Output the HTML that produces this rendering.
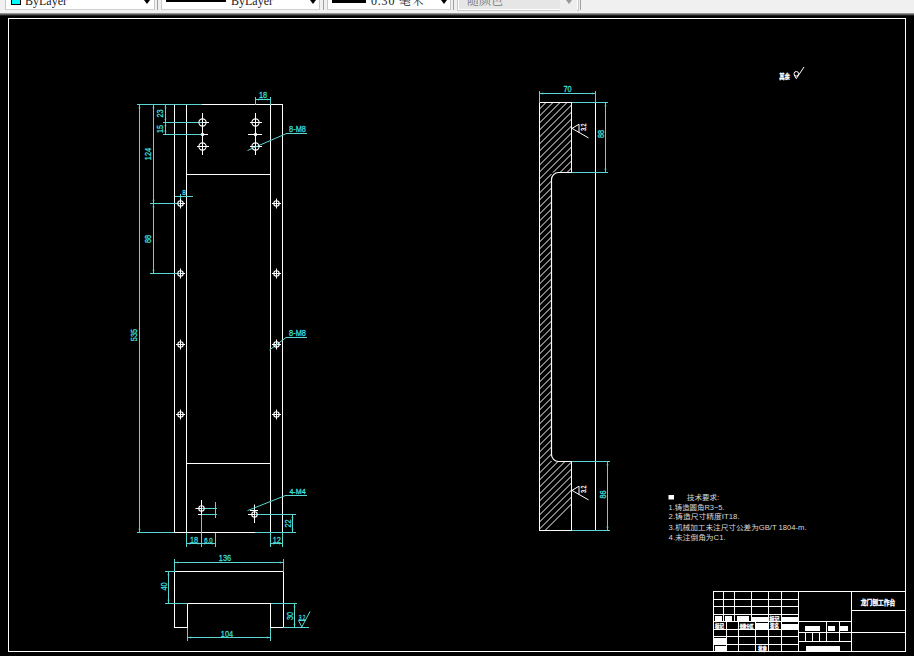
<!DOCTYPE html>
<html lang="zh"><head><meta charset="utf-8"><title>CAD</title>
<style>
html,body{margin:0;padding:0;background:#000;}
#app{position:relative;width:914px;height:656px;overflow:hidden;background:#000;font-family:"Liberation Sans","Noto Sans CJK SC",sans-serif;}
#tb{position:absolute;left:0;top:0;width:914px;height:13px;background:#f0f0f0;overflow:hidden;}
#tbs{position:absolute;left:0;top:13px;width:914px;height:3px;background:linear-gradient(#b0b0b0,#505050 55%,#000);}
.cb{position:absolute;top:-10px;height:20px;background:#fff;border:1px solid #c8c8c8;border-bottom-color:#d0d0d0;box-sizing:border-box;}
.cb span{position:absolute;top:3px;font:12px/14px "Liberation Serif","Noto Serif CJK SC",serif;color:#222;white-space:nowrap;}
.arr{position:absolute;top:9px;width:0;height:0;border-left:3.5px solid transparent;border-right:3.5px solid transparent;border-top:4px solid #000;}
.sep{position:absolute;top:0;width:1px;height:10px;background:#a0a0a0;}

</style></head><body><div id="app">
<svg width="914" height="656" viewBox="0 0 914 656" style="position:absolute;left:0;top:0" font-family="'Liberation Sans','Noto Sans CJK SC',sans-serif">
<path d="M539.50 109.00L546.00 102.50M539.50 116.00L553.00 102.50M539.50 123.00L560.00 102.50M539.50 130.00L567.00 102.50M539.50 137.00L571.50 105.00M539.50 144.00L571.50 112.00M539.50 151.00L571.50 119.00M539.50 158.00L571.50 126.00M539.50 165.00L571.50 133.00M539.50 172.00L571.50 140.00M539.50 179.00L571.50 147.00M539.50 186.00L551.50 174.00M553.00 172.50L571.50 154.00M539.50 193.00L551.50 181.00M560.00 172.50L571.50 161.00M539.50 200.00L551.50 188.00M567.00 172.50L571.50 168.00M539.50 207.00L551.50 195.00M539.50 214.00L551.50 202.00M539.50 221.00L551.50 209.00M539.50 228.00L551.50 216.00M539.50 235.00L551.50 223.00M539.50 242.00L551.50 230.00M539.50 249.00L551.50 237.00M539.50 256.00L551.50 244.00M539.50 263.00L551.50 251.00M539.50 270.00L551.50 258.00M539.50 277.00L551.50 265.00M539.50 284.00L551.50 272.00M539.50 291.00L551.50 279.00M539.50 298.00L551.50 286.00M539.50 305.00L551.50 293.00M539.50 312.00L551.50 300.00M539.50 319.00L551.50 307.00M539.50 326.00L551.50 314.00M539.50 333.00L551.50 321.00M539.50 340.00L551.50 328.00M539.50 347.00L551.50 335.00M539.50 354.00L551.50 342.00M539.50 361.00L551.50 349.00M539.50 368.00L551.50 356.00M539.50 375.00L551.50 363.00M539.50 382.00L551.50 370.00M539.50 389.00L551.50 377.00M539.50 396.00L551.50 384.00M539.50 403.00L551.50 391.00M539.50 410.00L551.50 398.00M539.50 417.00L551.50 405.00M539.50 424.00L551.50 412.00M539.50 431.00L551.50 419.00M539.50 438.00L551.50 426.00M539.50 445.00L551.50 433.00M539.50 452.00L551.50 440.00M539.50 459.00L551.50 447.00M539.50 466.00L551.50 454.00M539.50 473.00L551.50 461.00M539.50 480.00L558.00 461.50M539.50 487.00L565.00 461.50M539.50 494.00L571.50 462.00M539.50 501.00L571.50 469.00M539.50 508.00L571.50 476.00M539.50 515.00L571.50 483.00M539.50 522.00L571.50 490.00M539.50 529.00L571.50 497.00M545.00 530.50L571.50 504.00" stroke="#fff" stroke-width="1.0" fill="none"/>
<path d="M8 18.5L906 18.5M8 651.5L906 651.5M8.5 18L8.5 652M905.5 18L905.5 652M174.5 104L174.5 533M282.5 104L282.5 533M186.5 104L186.5 533M270.5 104L270.5 533M174 104.5L283 104.5M174 532.5L283 532.5M186 174.5L271 174.5M186 463.5L271 463.5M202.5 113L202.5 155M197.0 122.5L209.0 122.5M197.0 146.5L209.0 146.5M255.5 113L255.5 155M250.0 122.5L262.0 122.5M250.0 146.5L262.0 146.5M202.5 134.5L208 134.5M248 134.5L262 134.5M176.0 203.5L185.0 203.5M180.5 198.5L180.5 208.5M272.0 203.5L281.0 203.5M276.5 198.5L276.5 208.5M176.0 273.5L185.0 273.5M180.5 268.5L180.5 278.5M272.0 273.5L281.0 273.5M276.5 268.5L276.5 278.5M176.0 344.5L185.0 344.5M180.5 339.5L180.5 349.5M272.0 344.5L281.0 344.5M276.5 339.5L276.5 349.5M176.0 414.5L185.0 414.5M180.5 409.5L180.5 419.5M272.0 414.5L281.0 414.5M276.5 409.5L276.5 419.5M195.5 508.5L205 508.5M201.5 500L201.5 517M198 514.5L205 514.5M248 514.5L258 514.5M254.5 504.5L254.5 523M250 510.5L258 510.5M174 571.5L284 571.5M174.5 571L174.5 628M283.5 571L283.5 628M187 603.5L271 603.5M187.5 603L187.5 628M270.5 603L270.5 628M174 627.5L188 627.5M270 627.5L284 627.5M539.5 102L539.5 531M595.5 102L595.5 531M539 102.5L572 102.5M571.5 102L571.5 173M539 530.5L572 530.5M571.5 461L571.5 531M572 128.4L579 124.2M579 124.2L579 132.6M572 128.4L588.5 137.9M572 490.4L579 486.2M579 486.2L579 494.59999999999997M572 490.4L588.5 499.9M794.3 75.2L796.3 78.6M796.3 78.6L804 67M713 591.5L906 591.5M713.5 591L713.5 652M798.5 591L798.5 652M851.5 591L851.5 652M713 599.5L799 599.5M713 606.5L799 606.5M713 614.5L799 614.5M713 621.5L799 621.5M713 629.5L799 629.5M713 636.5L799 636.5M713 644.5L799 644.5M723.5 591L723.5 622M734.5 591L734.5 622M751.5 591L751.5 622M768.5 591L768.5 622M781.5 591L781.5 622M726.5 621L726.5 652M738.5 621L738.5 652M755.5 621L755.5 652M768.5 621L768.5 652M781.5 621L781.5 652M798 621.5L852 621.5M798 632.5L852 632.5M798 641.5L852 641.5M826.5 621L826.5 642M839.5 621L839.5 642M805.5 632L805.5 642M812.5 632L812.5 642M819.5 632L819.5 642M851 610.5L906 610.5M851 632.5L906 632.5" stroke="#ffffff" stroke-width="1" fill="none"/>
<path d="M137 104.5L202 104.5M137 532.5L174 532.5M139.5 104L139.5 533M153.5 104L153.5 204M150 203.5L180 203.5M153.5 204L153.5 274M150 273.5L180 273.5M165.5 104L165.5 135M163 122.5L202 122.5M163 134.5L202 134.5M175 196.5L193 196.5M180.5 194L180.5 199M255 99.5L271 99.5M255.5 97L255.5 105M270.5 97L270.5 105M247.5 150.5L286.5 133.5M286 133.5L307 133.5M269.5 350L286 337.5M286 337.5L307 337.5M247.5 510.6L285.5 495.5M285 495.5L307 495.5M186.5 533L186.5 547M201.5 515L201.5 547M215.5 502L215.5 518M215.5 533L215.5 547M186 543.5L216 543.5M202 508.5L217 508.5M202 514.5L217 514.5M270.5 533L270.5 547M282.5 533L282.5 547M270 543.5L283 543.5M255 514.5L296 514.5M255 532.5L296 532.5M292.5 514L292.5 533M174.5 559L174.5 572M283.5 559L283.5 572M174 562.5L284 562.5M165 571.5L175 571.5M165 603.5L188 603.5M168.5 571L168.5 604M271 603.5L297 603.5M283 627.5L309 627.5M294.5 603L294.5 628M187.5 628L187.5 641M270.5 628L270.5 641M187 637.5L271 637.5M298.5 620.5L301.8 627M301.8 627L310 611.5M298.5 620.5L306 620.5M539.5 91L539.5 103M595.5 91L595.5 103M539 93.5L596 93.5M572 102.5L608 102.5M572 172.5L608 172.5M605.5 102L605.5 173M572 461.5L610 461.5M572 530.5L610 530.5M607.5 461L607.5 531" stroke="#5cd6d2" stroke-width="1" fill="none"/>
<circle cx="202.5" cy="122.5" r="3.6" fill="none" stroke="#ffffff" stroke-width="1.1"/>
<circle cx="202.5" cy="146.5" r="3.6" fill="none" stroke="#ffffff" stroke-width="1.1"/>
<circle cx="202.5" cy="134.5" r="1.4" fill="none" stroke="#ffffff" stroke-width="1"/>
<circle cx="255.5" cy="122.5" r="3.6" fill="none" stroke="#ffffff" stroke-width="1.1"/>
<circle cx="255.5" cy="146.5" r="3.6" fill="none" stroke="#ffffff" stroke-width="1.1"/>
<circle cx="255.5" cy="134.5" r="1.4" fill="none" stroke="#ffffff" stroke-width="1"/>
<circle cx="180.5" cy="203.5" r="2.7" fill="none" stroke="#ffffff" stroke-width="1.1"/>
<circle cx="276.5" cy="203.5" r="2.7" fill="none" stroke="#ffffff" stroke-width="1.1"/>
<circle cx="180.5" cy="273.5" r="2.7" fill="none" stroke="#ffffff" stroke-width="1.1"/>
<circle cx="276.5" cy="273.5" r="2.7" fill="none" stroke="#ffffff" stroke-width="1.1"/>
<circle cx="180.5" cy="344.5" r="2.7" fill="none" stroke="#ffffff" stroke-width="1.1"/>
<circle cx="276.5" cy="344.5" r="2.7" fill="none" stroke="#ffffff" stroke-width="1.1"/>
<circle cx="180.5" cy="414.5" r="2.7" fill="none" stroke="#ffffff" stroke-width="1.1"/>
<circle cx="276.5" cy="414.5" r="2.7" fill="none" stroke="#ffffff" stroke-width="1.1"/>
<circle cx="201.5" cy="508.5" r="2.7" fill="none" stroke="#ffffff" stroke-width="1.1"/>
<circle cx="254.5" cy="514.5" r="2.7" fill="none" stroke="#ffffff" stroke-width="1.1"/>
<path d="M139.5 105l-1 3.2h2zM139.5 532l-1 -3.2h2z" fill="#5cd6d2"/>
<text transform="translate(137 335) rotate(-90) scale(0.82 1)" fill="#3cdcda" stroke="#3cdcda" stroke-width="0.3" font-size="9" text-anchor="middle">535</text>
<path d="M153.5 105l-1 3.2h2zM153.5 203l-1 -3.2h2z" fill="#5cd6d2"/>
<text transform="translate(151 154) rotate(-90) scale(0.82 1)" fill="#3cdcda" stroke="#3cdcda" stroke-width="0.3" font-size="9" text-anchor="middle">124</text>
<path d="M153.5 204l-1 3.2h2zM153.5 273l-1 -3.2h2z" fill="#5cd6d2"/>
<text transform="translate(151 239) rotate(-90) scale(0.82 1)" fill="#3cdcda" stroke="#3cdcda" stroke-width="0.3" font-size="9" text-anchor="middle">88</text>
<path d="M165.5 105l-1 3.2h2zM165.5 122l-1 -3.2h2z" fill="#5cd6d2"/>
<path d="M165.5 123l-1 3.2h2zM165.5 134l-1 -3.2h2z" fill="#5cd6d2"/>
<text transform="translate(163 113.5) rotate(-90) scale(0.82 1)" fill="#3cdcda" stroke="#3cdcda" stroke-width="0.3" font-size="9" text-anchor="middle">23</text>
<text transform="translate(163 129) rotate(-90) scale(0.82 1)" fill="#3cdcda" stroke="#3cdcda" stroke-width="0.3" font-size="9" text-anchor="middle">15</text>
<text transform="translate(184 194.5) scale(0.82 1)" fill="#3cdcda" stroke="#3cdcda" stroke-width="0.3" font-size="8" text-anchor="middle">8</text>
<path d="M256 99.5l3.2 -1v2zM270 99.5l-3.2 -1v2z" fill="#5cd6d2"/>
<text transform="translate(263 98) scale(0.82 1)" fill="#3cdcda" stroke="#3cdcda" stroke-width="0.3" font-size="9" text-anchor="middle">18</text>
<text transform="translate(297.5 131.8) scale(0.82 1)" fill="#3cdcda" stroke="#3cdcda" stroke-width="0.3" font-size="9" text-anchor="middle">8-M8</text>
<text transform="translate(297.5 335.8) scale(0.82 1)" fill="#3cdcda" stroke="#3cdcda" stroke-width="0.3" font-size="9" text-anchor="middle">8-M8</text>
<text transform="translate(297.5 494) scale(0.95 1)" fill="#3cdcda" stroke="#3cdcda" stroke-width="0.3" font-size="7.5" text-anchor="middle">4-M4</text>
<path d="M187 543.5l3.2 -1v2zM201 543.5l-3.2 -1v2z" fill="#5cd6d2"/>
<path d="M202 543.5l3.2 -1v2zM215 543.5l-3.2 -1v2z" fill="#5cd6d2"/>
<text transform="translate(194 542.5) scale(0.82 1)" fill="#3cdcda" stroke="#3cdcda" stroke-width="0.3" font-size="9" text-anchor="middle">18</text>
<text transform="translate(208.5 542.5) scale(0.82 1)" fill="#3cdcda" stroke="#3cdcda" stroke-width="0.3" font-size="7.4" text-anchor="middle">6.0</text>
<path d="M271 543.5l3.2 -1v2zM282 543.5l-3.2 -1v2z" fill="#5cd6d2"/>
<text transform="translate(276.8 542.5) scale(0.82 1)" fill="#3cdcda" stroke="#3cdcda" stroke-width="0.3" font-size="9" text-anchor="middle">12</text>
<path d="M292.5 515l-1 3.2h2zM292.5 532l-1 -3.2h2z" fill="#5cd6d2"/>
<text transform="translate(290.5 523.5) rotate(-90) scale(0.82 1)" fill="#3cdcda" stroke="#3cdcda" stroke-width="0.3" font-size="9" text-anchor="middle">22</text>
<path d="M175 562.5l3.2 -1v2zM283 562.5l-3.2 -1v2z" fill="#5cd6d2"/>
<text transform="translate(225 561) scale(0.82 1)" fill="#3cdcda" stroke="#3cdcda" stroke-width="0.3" font-size="9" text-anchor="middle">136</text>
<path d="M168.5 572l-1 3.2h2zM168.5 603l-1 -3.2h2z" fill="#5cd6d2"/>
<text transform="translate(167 586.5) rotate(-90) scale(0.82 1)" fill="#3cdcda" stroke="#3cdcda" stroke-width="0.3" font-size="9" text-anchor="middle">40</text>
<path d="M294.5 604l-1 3.2h2zM294.5 627l-1 -3.2h2z" fill="#5cd6d2"/>
<text transform="translate(292.5 616) rotate(-90) scale(0.82 1)" fill="#3cdcda" stroke="#3cdcda" stroke-width="0.3" font-size="9" text-anchor="middle">30</text>
<path d="M188 637.5l3.2 -1v2zM270 637.5l-3.2 -1v2z" fill="#5cd6d2"/>
<text transform="translate(227 636.5) scale(0.82 1)" fill="#3cdcda" stroke="#3cdcda" stroke-width="0.3" font-size="9" text-anchor="middle">104</text>
<text transform="translate(302 619.5) scale(0.6 1)" fill="#3cdcda" stroke="#3cdcda" stroke-width="0.3" font-size="8" text-anchor="middle">3.2</text>
<path d="M571.5 172.5H558.5A7 7 0 0 0 551.5 179.5V454.5A7 7 0 0 0 558.5 461.5H571.5" fill="none" stroke="#ffffff" stroke-width="1.2"/>
<path d="M540 93.5l3.2 -1v2zM595 93.5l-3.2 -1v2z" fill="#5cd6d2"/>
<text transform="translate(567.5 92) scale(0.82 1)" fill="#3cdcda" stroke="#3cdcda" stroke-width="0.3" font-size="9" text-anchor="middle">70</text>
<path d="M605.5 103l-1 3.2h2zM605.5 172l-1 -3.2h2z" fill="#5cd6d2"/>
<text transform="translate(603.5 134) rotate(-90) scale(0.82 1)" fill="#3cdcda" stroke="#3cdcda" stroke-width="0.3" font-size="9" text-anchor="middle">88</text>
<path d="M607.5 462l-1 3.2h2zM607.5 530l-1 -3.2h2z" fill="#5cd6d2"/>
<text transform="translate(605.5 494.5) rotate(-90) scale(0.82 1)" fill="#3cdcda" stroke="#3cdcda" stroke-width="0.3" font-size="9" text-anchor="middle">86</text>
<text transform="translate(586 127.2) rotate(-90) scale(0.7 1)" fill="#ffffff" stroke="#ffffff" stroke-width="0.3" font-size="7.5" text-anchor="middle">3.2</text>
<text transform="translate(586 489.2) rotate(-90) scale(0.7 1)" fill="#ffffff" stroke="#ffffff" stroke-width="0.3" font-size="7.5" text-anchor="middle">3.2</text>
<text transform="translate(784.5 79.3) scale(0.82 1)" fill="#ffffff" stroke="#ffffff" stroke-width="0.3" font-size="6.5" text-anchor="middle" font-weight="bold">其余</text>
<circle cx="796.3" cy="73.8" r="2.3" fill="none" stroke="#ffffff" stroke-width="1"/>
<rect x="668.5" y="495" width="5.5" height="4.5" fill="#ffffff"/>
<text x="687" y="499.5" fill="#d8d8d8" font-size="7" textLength="32" lengthAdjust="spacingAndGlyphs">技术要求:</text>
<text x="668.6" y="509.8" fill="#d8d8d8" font-size="7" textLength="55.8" lengthAdjust="spacingAndGlyphs">1.铸造圆角R3~5.</text>
<text x="668.6" y="519.3" fill="#d8d8d8" font-size="7" textLength="71" lengthAdjust="spacingAndGlyphs">2.铸造尺寸精度IT18.</text>
<text x="668.6" y="529.5" fill="#d8d8d8" font-size="7" textLength="138" lengthAdjust="spacingAndGlyphs">3.机械加工未注尺寸公差为GB/T 1804-m.</text>
<text x="668.6" y="540" fill="#d8d8d8" font-size="7" textLength="57" lengthAdjust="spacingAndGlyphs">4.未注倒角为C1.</text>
<text transform="translate(878 605) scale(0.85 1)" fill="#ffffff" stroke="#ffffff" stroke-width="0.3" font-size="6.8" text-anchor="middle" font-weight="bold">龙门刨工作台</text>
<rect x="715" y="616" width="7" height="5" fill="#ffffff"/>
<rect x="725" y="616" width="7" height="5" fill="#ffffff"/>
<rect x="737" y="616" width="12" height="5" fill="#ffffff"/>
<rect x="752" y="617" width="16" height="4" fill="#ffffff"/>
<rect x="782" y="617" width="16" height="4" fill="#ffffff"/>
<rect x="756" y="623" width="12" height="6" fill="#ffffff"/>
<rect x="782" y="624" width="16" height="5" fill="#ffffff"/>
<rect x="714" y="638" width="12" height="6" fill="#ffffff"/>
<rect x="715" y="646" width="11" height="5" fill="#ffffff"/>
<rect x="805" y="626" width="15" height="5" fill="#ffffff"/>
<rect x="828" y="626" width="7" height="5" fill="#ffffff"/>
<rect x="840" y="626" width="8" height="5" fill="#ffffff"/>
<rect x="806" y="646" width="34" height="5" fill="#ffffff"/>
<text transform="translate(774.5 620.8) scale(0.82 1)" fill="#ffffff" stroke="#ffffff" stroke-width="0.3" font-size="6" text-anchor="middle" font-weight="bold">标记</text>
<text transform="translate(719.5 628.3) scale(0.82 1)" fill="#ffffff" stroke="#ffffff" stroke-width="0.3" font-size="5.5" text-anchor="middle" font-weight="bold">标记</text>
<text transform="translate(746.5 628.3) scale(0.82 1)" fill="#ffffff" stroke="#ffffff" stroke-width="0.3" font-size="4.2" text-anchor="middle" font-weight="bold">处数分区</text>
<text transform="translate(774.5 628.3) scale(0.82 1)" fill="#ffffff" stroke="#ffffff" stroke-width="0.3" font-size="5.5" text-anchor="middle" font-weight="bold">签名</text>
<text transform="translate(762.5 651) scale(0.82 1)" fill="#ffffff" stroke="#ffffff" stroke-width="0.3" font-size="5.2" text-anchor="middle" font-weight="bold">批准</text>
</svg>
<div id="tb">
 <div class="cb" style="left:5px;width:150px;"><div style="position:absolute;left:5px;top:1px;width:8px;height:11px;background:#00ffff;border:1px solid #000;box-sizing:content-box;"></div><span style="left:19px;">ByLayer</span><div class="arr" style="left:138px;"></div></div>
 <div class="sep" style="left:157px;"></div>
 <div class="cb" style="left:161px;width:159px;"><div style="position:absolute;left:4px;top:8px;width:60px;height:3px;background:#000;"></div><span style="left:69px;">ByLayer</span><div class="arr" style="left:148px;"></div></div>
 <div class="sep" style="left:323px;"></div>
 <div class="cb" style="left:327px;width:124px;"><div style="position:absolute;left:4px;top:7px;width:34px;height:5px;background:#000;"></div><span style="left:43px;letter-spacing:0.8px;">0.30 毫米</span><div class="arr" style="left:113px;"></div></div>
 <div class="sep" style="left:453px;"></div>
 <div class="cb" style="left:458px;width:120px;background:#e6e6e6;border-color:#fff;box-shadow:0 0 0 1px #c8c8c8;"><span style="left:8px;color:#777;">随颜色</span><div style="position:absolute;left:101px;top:0;width:17px;height:20px;background:#eee;"></div><div class="arr" style="left:107px;border-top-color:#999;"></div></div>
 <div class="sep" style="left:580px;"></div>
</div>
<div id="tbs"></div>

</div></body></html>
